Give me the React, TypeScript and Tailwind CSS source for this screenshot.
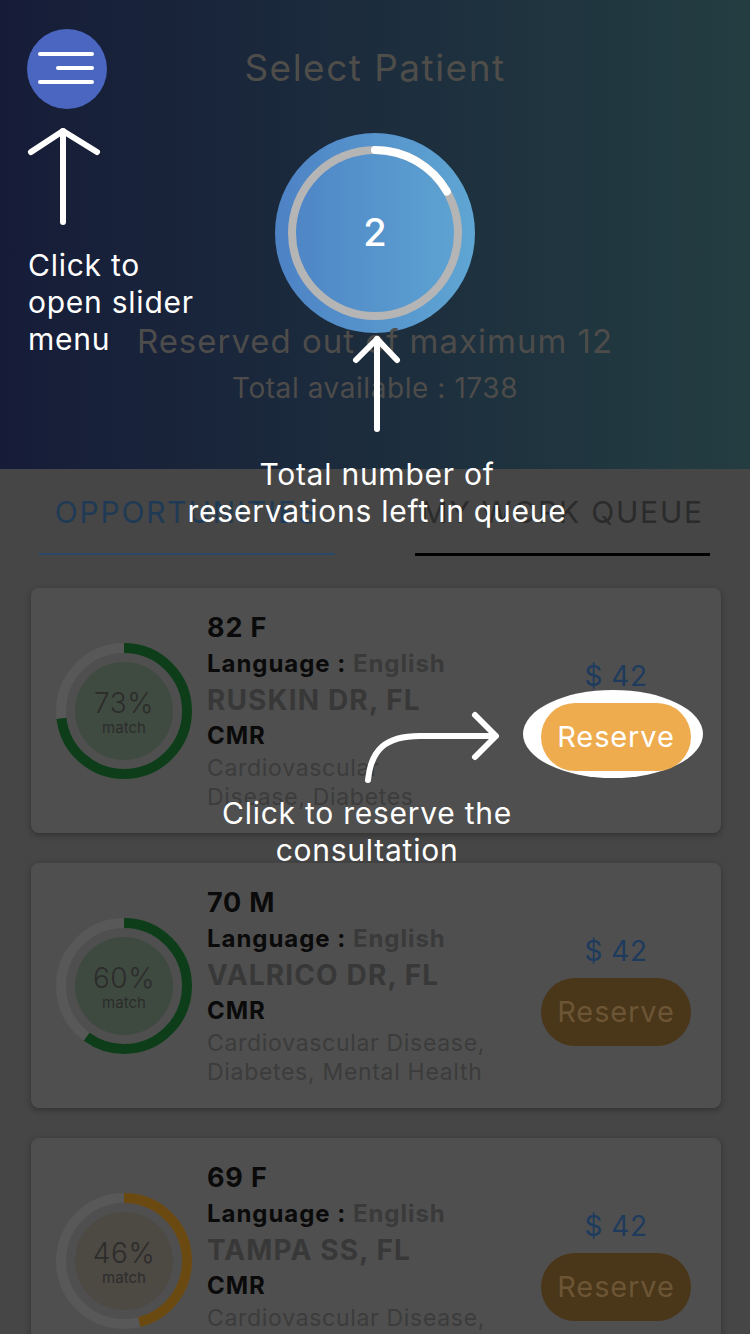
import React from 'react';

type Patient = {
  age: string;
  match: number;
  arc: string;
  disk: string;
  address: string;
  conditions: string[];
  highlighted?: boolean;
};

const patients: Patient[] = [
  { age: '82 F', match: 73, arc: '#0d3d19', disk: '#3f4b41', address: 'RUSKIN DR, FL', conditions: ['Cardiovascular', 'Disease, Diabetes'], highlighted: true },
  { age: '70 M', match: 60, arc: '#0d3d19', disk: '#3e4a40', address: 'VALRICO DR, FL', conditions: ['Cardiovascular Disease,', 'Diabetes, Mental Health'] },
  { age: '69 F', match: 46, arc: '#6b4a12', disk: '#4d4943', address: 'TAMPA SS, FL', conditions: ['Cardiovascular Disease,', 'Diabetes'] },
];

function MatchRing({ value, arc, disk }: { value: number; arc: string; disk: string }) {
  const r = 63;
  const c = 2 * Math.PI * r;
  return (
    <div className="relative w-[136px] h-[136px] shrink-0">
      <svg width="136" height="136" viewBox="0 0 136 136">
        <circle cx="68" cy="68" r={r} fill="none" stroke="#585858" strokeWidth="10" />
        <circle
          cx="68"
          cy="68"
          r={r}
          fill="none"
          stroke={arc}
          strokeWidth="10"
          strokeDasharray={`${(c * value) / 100} ${c}`}
          transform="rotate(-90 68 68)"
        />
        <circle cx="68" cy="68" r="49" fill={disk} />
      </svg>
      <div className="absolute inset-0 flex flex-col items-center justify-center text-[#2c2c2c] pt-[4px]">
        <span className="text-[28px] leading-[30px] font-light tracking-[0.02em]">{value}%</span>
        <span className="text-[15px] leading-[20px]">match</span>
      </div>
    </div>
  );
}

function PatientCard({ p }: { p: Patient }) {
  return (
    <div className="ml-[31px] w-[690px] h-[245px] rounded-[8px] bg-[#4f4f4f] shadow-[0_2px_6px_rgba(0,0,0,0.3)] flex items-center pl-[25px] pr-[30px]">
      <MatchRing value={p.match} arc={p.arc} disk={p.disk} />
      <div className="ml-[15px] flex-1 flex flex-col">
        <div className="text-[27px] leading-[36px] font-bold text-[#0a0a0a] tracking-[0.03em]">{p.age}</div>
        <div className="text-[24px] leading-[36px] font-bold text-[#0a0a0a] tracking-[0.04em] whitespace-nowrap">
          Language : <span className="text-[#3a3a3a]">English</span>
        </div>
        <div className="text-[28px] leading-[36px] font-bold text-[#383838] tracking-[0.04em] whitespace-nowrap">{p.address}</div>
        <div className="text-[24px] leading-[36px] font-bold text-[#0a0a0a] tracking-[0.04em]">CMR</div>
        {p.conditions.map((line) => (
          <div key={line} className="text-[23px] leading-[29px] text-[#3c3c3c] tracking-[0.03em] whitespace-nowrap">{line}</div>
        ))}
      </div>
      <div className="w-[150px] flex flex-col items-center mt-[8px]">
        <div className="text-[28px] leading-[36px] text-[#1e3b5d] tracking-[0.02em]">$ 42</div>
        {p.highlighted ? (
          <div className="relative mt-[9px]">
            <div className="absolute left-[-18px] right-[-12px] top-[-13px] bottom-[-7px] rounded-[50%] bg-white" />
            <div className="relative w-[150px] h-[68px] rounded-full bg-[#eeac4f] flex items-center justify-center text-[29px] tracking-[0.03em] text-white">
              Reserve
            </div>
          </div>
        ) : (
          <div className="mt-[9px] w-[150px] h-[68px] rounded-full bg-[#4a3619] flex items-center justify-center text-[29px] tracking-[0.03em] text-[#6c5535]">
            Reserve
          </div>
        )}
      </div>
    </div>
  );
}

export default function App() {
  return (
    <div className="relative w-[750px] h-[1334px] overflow-hidden bg-[#464646] font-['Inter',sans-serif]">
      {/* Header */}
      <div className="relative h-[469px] bg-gradient-to-r from-[#161c38] to-[#233d41] flex flex-col items-center pt-[44px]">
        <button className="absolute left-[27px] top-[29px] w-[80px] h-[80px] rounded-full bg-[#4a66c0]">
          <svg width="80" height="80" viewBox="0 0 80 80">
            <g stroke="#fff" strokeWidth="4" strokeLinecap="round">
              <line x1="13" y1="25" x2="65" y2="25" />
              <line x1="31" y1="39" x2="65" y2="39" />
              <line x1="13" y1="53" x2="65" y2="53" />
            </g>
          </svg>
        </button>
        <div className="text-[37px] leading-[48px] text-[#4f4d4a] tracking-[0.04em]">Select Patient</div>
        <div className="mt-[41px] w-[200px] h-[200px]">
          <svg width="200" height="200" viewBox="0 0 200 200">
            <defs>
              <linearGradient id="cg" x1="0" y1="0" x2="1" y2="0">
                <stop offset="0" stopColor="#4d82c5" />
                <stop offset="1" stopColor="#5fa6d3" />
              </linearGradient>
            </defs>
            <circle cx="100" cy="100" r="100" fill="url(#cg)" />
            <circle cx="100" cy="100" r="83" fill="none" stroke="#b5b5b5" strokeWidth="8" />
            <path d="M100 17 A83 83 0 0 1 171.9 58.5" fill="none" stroke="#fff" strokeWidth="8" strokeLinecap="round" />
            <text x="100" y="113" textAnchor="middle" fill="#fff" fontSize="38" fontWeight="500" fontFamily="Inter, sans-serif">2</text>
          </svg>
        </div>
        <div className="mt-[-12px] text-[33px] leading-[40px] text-[#4d4c4a] tracking-[0.03em]">Reserved out of maximum 12</div>
        <div className="mt-[9px] text-[28px] leading-[36px] text-[#4d4c4a] tracking-[0.02em]">Total available : 1738</div>
      </div>

      {/* Tabs */}
      <div className="flex gap-[80px] pl-[39px] pr-[40px] pt-[25px]">
        <div className="flex-1 flex flex-col items-center">
          <div className="text-[30px] leading-[36px] text-[#1f3a55] tracking-[0.06em] whitespace-nowrap">OPPORTUNITIES</div>
          <div className="mt-[23px] w-full h-[2px] bg-[#2a4868]" />
        </div>
        <div className="flex-1 flex flex-col items-center">
          <div className="text-[30px] leading-[36px] text-[#2b2b2b] tracking-[0.06em] whitespace-nowrap">MY WORK QUEUE</div>
          <div className="mt-[23px] w-full h-[3px] bg-black" />
        </div>
      </div>

      {/* Cards */}
      <div className="mt-[32px] flex flex-col gap-[30px]">
        {patients.map((p) => (
          <PatientCard key={p.age} p={p} />
        ))}
      </div>

      {/* Coach marks */}
      <svg className="absolute inset-0 pointer-events-none" width="750" height="1334" viewBox="0 0 750 1334">
        <g fill="none" stroke="#fff" strokeWidth="6" strokeLinecap="round" strokeLinejoin="round">
          <path d="M63 222 L63 131" />
          <path d="M31 152 L63 131 L97 152" />
          <path d="M377 429 L377 339" />
          <path d="M356 360 L377 339 L397 360" />
          <path d="M368 780 C371 750 385 736 420 736 L495 736" />
          <path d="M475 715 L496 736 L475 757" />
        </g>
      </svg>
      <div className="absolute left-[28px] top-[247px] text-[30px] leading-[37px] tracking-[0.025em] text-white">
        Click to
        <br />
        open slider
        <br />
        menu
      </div>
      <div className="absolute left-0 right-0 top-[456px] flex justify-center">
        <div className="ml-[4px] text-center text-[30px] leading-[37px] tracking-[0.025em] text-white">
          Total number of
          <br />
          reservations left in queue
        </div>
      </div>
      <div className="absolute left-0 right-0 top-[795px] flex justify-center">
        <div className="mr-[16px] text-center text-[30px] leading-[37px] tracking-[0.025em] text-white">
          Click to reserve the
          <br />
          consultation
        </div>
      </div>
    </div>
  );
}
